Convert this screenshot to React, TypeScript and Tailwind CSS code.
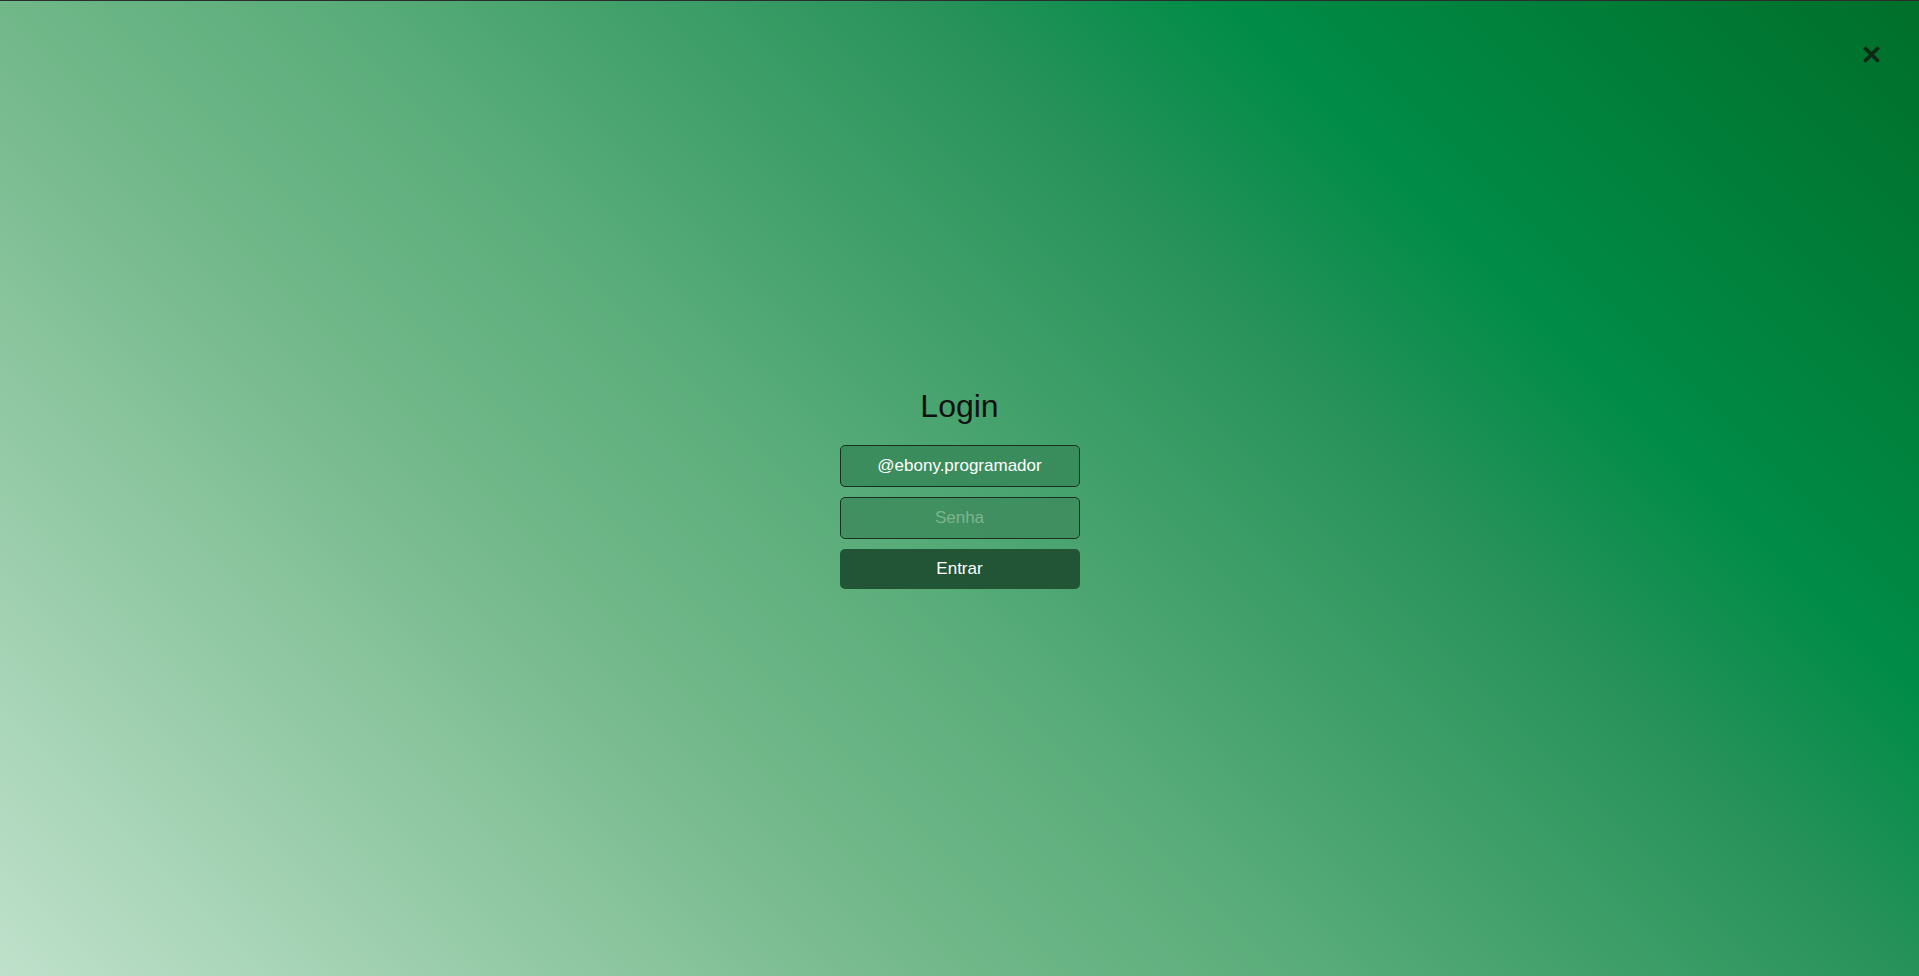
import React from "react";

export default function App() {
  return (
    <div
      className="relative flex h-screen w-full items-center justify-center overflow-hidden border-t border-[#2b2b2b] bg-[linear-gradient(45deg,#bfe1cb_0%,#74b98b_32%,#5aad7a_45%,#27925a_66%,#008c47_76%,#006f2a_100%)]"
      style={{ fontFamily: '"Liberation Sans", Arial, sans-serif' }}
    >
      <button className="absolute right-[39px] top-[44px] flex h-[18px] w-[18px] items-center justify-center">
        <svg width="17" height="17" viewBox="0 0 17 17" fill="none">
          <path d="M2.5 2.5 L14.5 14.5 M14.5 2.5 L2.5 14.5" stroke="#0a2a14" strokeWidth="3.8" strokeLinecap="round" />
        </svg>
      </button>

      <div className="flex w-[240px] flex-col items-stretch">
        <h1 className="mb-[20px] text-center text-[32px] leading-[37px] text-[#111]">Login</h1>
        <input
          type="text"
          defaultValue="@ebony.programador"
          className="h-[42px] w-full rounded-[5px] border border-[#17301f] bg-[#398a5b]/90 text-center text-[17px] text-white outline-none"
        />
        <input
          type="password"
          placeholder="Senha"
          className="mt-[10px] h-[42px] w-full rounded-[5px] border border-[#17301f] bg-[#3f8d5e]/90 text-center text-[17px] text-white outline-none placeholder:text-[#7fb390]"
        />
        <button className="mt-[10px] h-[40px] w-full rounded-[5px] bg-[#215535] text-[17px] text-white">
          Entrar
        </button>
      </div>
    </div>
  );
}
